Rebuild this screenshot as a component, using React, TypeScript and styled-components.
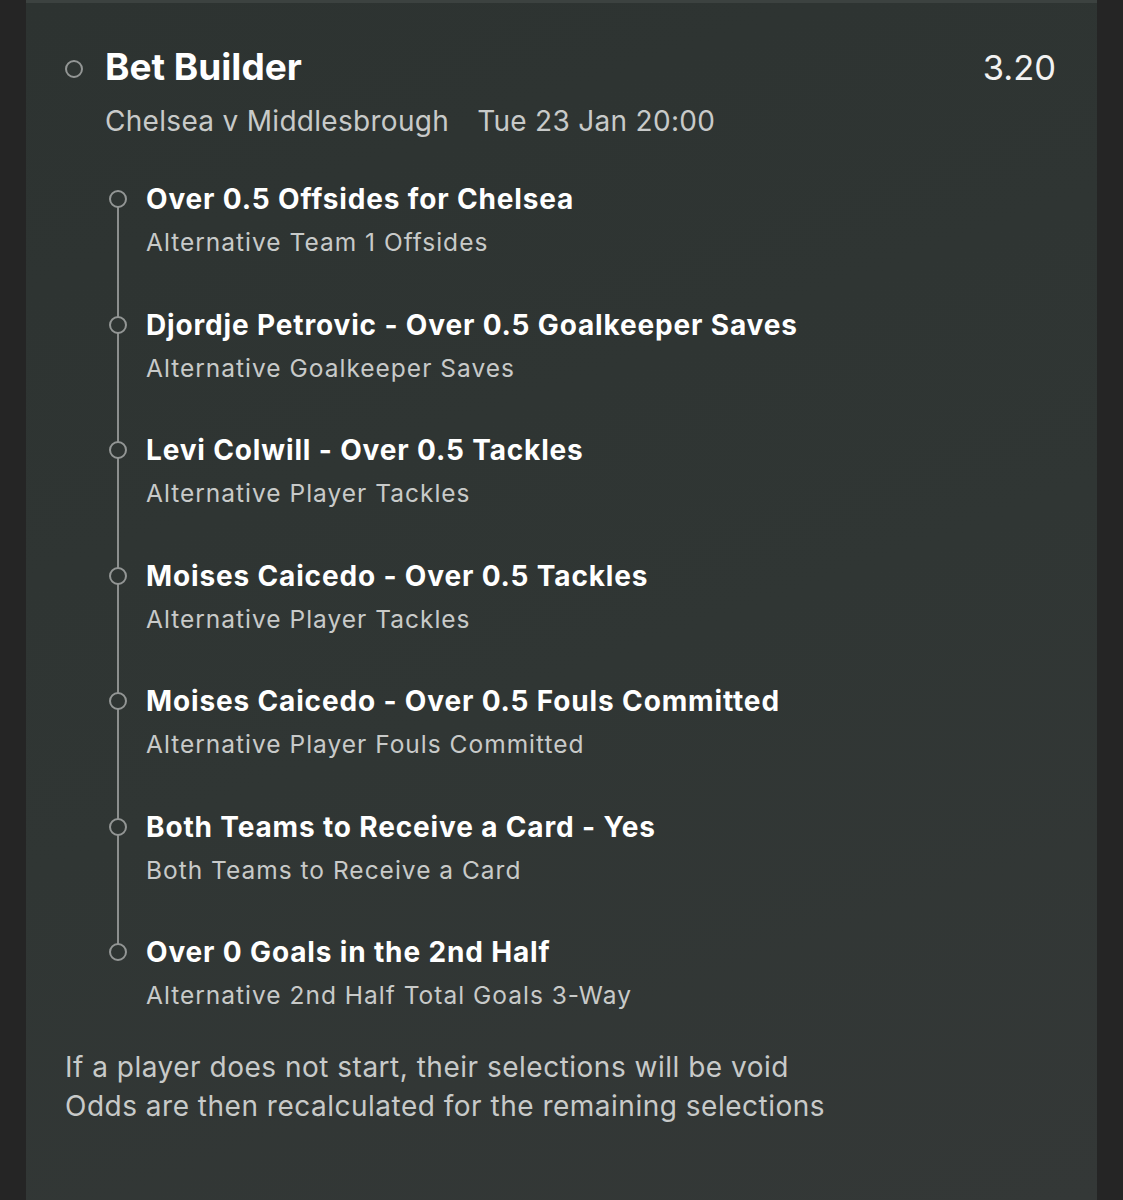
import React from "react";
import styled, { createGlobalStyle } from "styled-components";

const GlobalStyle = createGlobalStyle`
  html, body {
    margin: 0;
    padding: 0;
    background: #252525;
  }
  body {
    font-family: Inter, "Noto Sans", "Liberation Sans", sans-serif;
    -webkit-font-smoothing: antialiased;
  }
`;

const Page = styled.div`
  display: flex;
  min-height: 1200px;
  padding: 0 26px;
`;

const Panel = styled.section`
  flex: 1;
  box-sizing: border-box;
  border-top: 3px solid #3c4240;
  background: linear-gradient(160deg, #2d3331 0%, #303634 55%, #343837 100%);
  padding: 44px 42px 0 39px;
`;

const HeaderRow = styled.div`
  display: flex;
  align-items: flex-start;
`;

const Ring = styled.span<{ size?: number }>`
  flex: none;
  box-sizing: border-box;
  width: ${(p) => p.size ?? 18}px;
  height: ${(p) => p.size ?? 18}px;
  border-radius: 50%;
  border: 2px solid #939695;
  background: #2f3533;
  position: relative;
  z-index: 1;
`;

const HeaderRing = styled(Ring)`
  margin-top: 13px;
  margin-right: 22px;
`;

const HeaderText = styled.div`
  flex: 1;
  display: flex;
  flex-direction: column;
`;

const TitleLine = styled.div`
  display: flex;
  justify-content: space-between;
  align-items: baseline;
`;

const Title = styled.h1`
  margin: 0;
  font-size: 37px;
  line-height: 40px;
  font-weight: 700;
  color: #ffffff;
`;

const Odds = styled.span`
  font-size: 34.5px;
  line-height: 40px;
  font-weight: 400;
  color: #f2f2f2;
  margin-right: -1px;
`;

const Fixture = styled.div`
  margin-top: 15px;
  display: flex;
  gap: 28px;
  font-size: 28px;
  line-height: 36px;
  color: #c8cac9;
  letter-spacing: 0.3px;
`;

const Legs = styled.ol`
  list-style: none;
  margin: 42px 0 0 44px;
  padding: 0;
  display: flex;
  flex-direction: column;
  gap: 46.5px;
`;

const Leg = styled.li`
  position: relative;
  display: flex;
  align-items: flex-start;
  gap: 19px;

  &:not(:last-child)::before {
    content: "";
    position: absolute;
    left: 8px;
    top: 18px;
    width: 2px;
    height: calc(100% + 46.5px);
    background: #8c8f8e;
  }
`;

const LegRing = styled(Ring)`
  margin-top: 9px;
`;

const LegText = styled.div`
  display: flex;
  flex-direction: column;
  gap: 7px;
`;

const LegTitle = styled.div`
  font-size: 28px;
  line-height: 36px;
  font-weight: 700;
  color: #ffffff;
  letter-spacing: 0.85px;
`;

const LegMarket = styled.div`
  font-size: 24.5px;
  line-height: 36px;
  color: #c8cac9;
  letter-spacing: 1px;
`;

const Notes = styled.div`
  margin-top: 35px;
  font-size: 28px;
  line-height: 39px;
  color: #c8cac9;
  letter-spacing: 0.5px;
`;

const legs = [
  { pick: "Over 0.5 Offsides for Chelsea", market: "Alternative Team 1 Offsides" },
  { pick: "Djordje Petrovic - Over 0.5 Goalkeeper Saves", market: "Alternative Goalkeeper Saves" },
  { pick: "Levi Colwill - Over 0.5 Tackles", market: "Alternative Player Tackles" },
  { pick: "Moises Caicedo - Over 0.5 Tackles", market: "Alternative Player Tackles" },
  { pick: "Moises Caicedo - Over 0.5 Fouls Committed", market: "Alternative Player Fouls Committed" },
  { pick: "Both Teams to Receive a Card - Yes", market: "Both Teams to Receive a Card" },
  { pick: "Over 0 Goals in the 2nd Half", market: "Alternative 2nd Half Total Goals 3-Way" },
];

export default function App() {
  return (
    <>
      <GlobalStyle />
      <Page>
        <Panel>
          <HeaderRow>
            <HeaderRing />
            <HeaderText>
              <TitleLine>
                <Title>Bet Builder</Title>
                <Odds>3.20</Odds>
              </TitleLine>
              <Fixture>
                <span>Chelsea v Middlesbrough</span>
                <span>Tue 23 Jan 20:00</span>
              </Fixture>
            </HeaderText>
          </HeaderRow>

          <Legs>
            {legs.map((leg, i) => (
              <Leg key={i}>
                <LegRing />
                <LegText>
                  <LegTitle>{leg.pick}</LegTitle>
                  <LegMarket>{leg.market}</LegMarket>
                </LegText>
              </Leg>
            ))}
          </Legs>

          <Notes>
            If a player does not start, their selections will be void
            <br />
            Odds are then recalculated for the remaining selections
          </Notes>
        </Panel>
      </Page>
    </>
  );
}
